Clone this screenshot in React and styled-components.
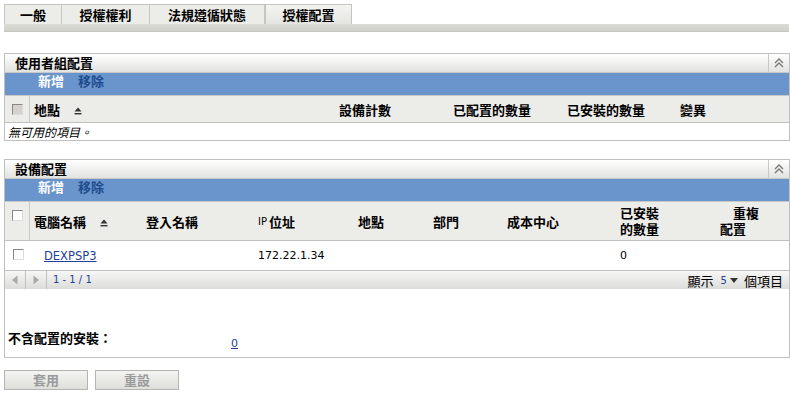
import styled, { createGlobalStyle } from 'styled-components'

const GlobalStyle = createGlobalStyle`
  body {
    margin: 0;
    background: #fff;
    font-family: 'Noto Sans CJK TC', 'DejaVu Sans', sans-serif;
    font-size: 13px;
    color: #000;
  }
`

const tabs = ['一般', '授權權利', '法規遵循狀態', '授權配置']
const tabWidths = [58, 88, 115, 87]

const groupCols = [
  { label: '地點', width: 305, sort: true },
  { label: '設備計數', width: 114 },
  { label: '已配置的數量', width: 114 },
  { label: '已安裝的數量', width: 113 },
  { label: '變異', width: 113 },
]

const deviceCols = [
  { label: '電腦名稱', width: 116, sort: true },
  { label: '登入名稱', width: 112 },
  { label: 'IP 位址', width: 100, ip: true },
  { label: '地點', width: 75 },
  { label: '部門', width: 74 },
  { label: '成本中心', width: 113 },
  { label: ['已安裝', '的數量'], width: 100 },
  { label: ['重複', '配置'], width: 69, shifted: true },
]

const SortIcon = () => (
  <svg width="8" height="8" viewBox="0 0 8 8">
    <path d="M4 0.5 L7.5 4.5 H0.5 Z" fill="#333" />
    <rect x="0.5" y="6" width="7" height="1.4" fill="#333" />
  </svg>
)

const CollapseIcon = () => (
  <svg width="12" height="12" viewBox="0 0 12 12">
    <path d="M2 6 L6 2 L10 6" stroke="#777" strokeWidth="1.4" fill="none" />
    <path d="M2 10 L6 6 L10 10" stroke="#777" strokeWidth="1.4" fill="none" />
  </svg>
)

const Arrow = ({ dir }) => (
  <svg width="8" height="10" viewBox="0 0 8 10">
    {dir === 'left' ? (
      <path d="M6.5 0.5 L1 5 L6.5 9.5 Z" fill="#aaa" />
    ) : (
      <path d="M1.5 0.5 L7 5 L1.5 9.5 Z" fill="#aaa" />
    )}
  </svg>
)

const PanelHeader = ({ title }) => (
  <Head>
    <HeadTitle>{title}</HeadTitle>
    <CollapseBtn>
      <CollapseIcon />
    </CollapseBtn>
  </Head>
)

const Toolbar = () => (
  <Tools>
    <ToolLink active>新增</ToolLink>
    <ToolLink>移除</ToolLink>
  </Tools>
)

export default function App() {
  return (
    <Page>
      <GlobalStyle />
      <TabRow>
        {tabs.map((t, i) => (
          <Tab key={t} width={tabWidths[i]} active={i === 3}>
            {t}
          </Tab>
        ))}
      </TabRow>
      <TabStrip />

      <Panel first>
        <PanelHeader title="使用者組配置" />
        <Toolbar />
        <HeaderRow height={26}>
          <CheckCell>
            <Check disabled />
          </CheckCell>
          {groupCols.map((c) => (
            <HeadCell key={c.label} width={c.width}>
              {c.label}
              {c.sort && (
                <SortWrap>
                  <SortIcon />
                </SortWrap>
              )}
            </HeadCell>
          ))}
        </HeaderRow>
        <EmptyRow>無可用的項目。</EmptyRow>
      </Panel>

      <Panel>
        <PanelHeader title="設備配置" />
        <Toolbar />
        <HeaderRow height={38}>
          <CheckCell>
            <Check />
          </CheckCell>
          {deviceCols.map((c, i) => (
            <HeadCell key={i} width={c.width} pad={i === 0 ? 4 : 0}>
              {Array.isArray(c.label) ? (
                <Stack>
                  <Line shift={c.shifted ? 13 : 0}>{c.label[0]}</Line>
                  <Line>{c.label[1]}</Line>
                </Stack>
              ) : c.ip ? (
                <>
                  <IpTag>IP</IpTag> 位址
                </>
              ) : (
                c.label
              )}
              {c.sort && (
                <SortWrap>
                  <SortIcon />
                </SortWrap>
              )}
            </HeadCell>
          ))}
        </HeaderRow>
        <DataRow>
          <CheckCell plain>
            <Check />
          </CheckCell>
          <DataCell width={116} pad={14}>
            <Link>DEXPSP3</Link>
          </DataCell>
          <DataCell width={112} />
          <DataCell width={100}>172.22.1.34</DataCell>
          <DataCell width={75} />
          <DataCell width={74} />
          <DataCell width={113} />
          <DataCell width={100}>0</DataCell>
        </DataRow>
        <Pager>
          <PagerBtn>
            <Arrow dir="left" />
          </PagerBtn>
          <PagerBtn>
            <Arrow dir="right" />
          </PagerBtn>
          <PagerText>1 - 1 / 1</PagerText>
          <PagerRight>
            顯示 <PageSize>5</PageSize>
            <DropArrow /> 個項目
          </PagerRight>
        </Pager>
        <Summary>
          <SummaryLabel>不含配置的安裝：</SummaryLabel>
          <SummaryLink>0</SummaryLink>
        </Summary>
      </Panel>

      <Buttons>
        <Button>套用</Button>
        <Button>重設</Button>
      </Buttons>
    </Page>
  )
}

const Page = styled.div`
  padding: 4px 1px 0 4px;
  width: 785px;
`

const TabRow = styled.div`
  display: flex;
  height: 20px;
`

const Tab = styled.div`
  width: ${({ width }) => width}px;
  box-sizing: border-box;
  border: 1px solid #c4c4c0;
  border-bottom: none;
  border-left-width: ${({ active }) => (active ? 1 : 0)}px;
  &:first-child {
    border-left-width: 1px;
  }
  background: ${({ active }) =>
    active ? 'linear-gradient(#f4f4f2, #e4e4e0)' : '#ecece9'};
  font-weight: bold;
  font-size: 13px;
  line-height: 19px;
  text-align: center;
`

const TabStrip = styled.div`
  height: 7px;
  background: linear-gradient(#dcdcd7, #d0d0cb);
  border-bottom: 1px solid #c6c6c0;
`

const Panel = styled.div`
  margin-top: ${({ first }) => (first ? 21 : 18)}px;
  border: 1px solid #c0c0c0;
  box-sizing: border-box;
  width: 786px;
`

const Head = styled.div`
  display: flex;
  align-items: stretch;
  height: 18px;
  background: linear-gradient(#ffffff, #e2e2df);
  border-bottom: 1px solid #c8c8c8;
`

const HeadTitle = styled.div`
  flex: 1;
  padding-left: 10px;
  font-weight: bold;
  font-size: 13px;
  line-height: 18px;
`

const CollapseBtn = styled.div`
  width: 20px;
  border-left: 1px solid #c8c8c8;
  display: flex;
  align-items: center;
  justify-content: center;
`

const Tools = styled.div`
  display: flex;
  gap: 14px;
  height: 22px;
  align-items: flex-start;
  padding-left: 33px;
  background: #6a95cc;
  border-bottom: 1px solid #c8c8c8;
`

const ToolLink = styled.span`
  font-weight: bold;
  font-size: 13px;
  line-height: 16px;
  color: ${({ active }) => (active ? '#fff' : '#1f4c8f')};
`

const HeaderRow = styled.div`
  display: flex;
  height: ${({ height }) => height}px;
  background: #ecece9;
  border-bottom: 1px solid #c0c0c0;
`

const CheckCell = styled.div`
  width: 25px;
  box-sizing: border-box;
  border-right: ${({ plain }) => (plain ? 'none' : '1px solid #c8c8c8')};
  display: flex;
  justify-content: center;
  padding-top: 8px;
  padding-left: 1px;
`

const Check = styled.div`
  width: 11px;
  height: 11px;
  box-sizing: border-box;
  border: 1px solid #888;
  border-right-color: #ddd;
  border-bottom-color: #ddd;
  background: ${({ disabled }) => (disabled ? '#d6d3ce' : '#fff')};
`

const HeadCell = styled.div`
  width: ${({ width }) => width}px;
  flex-shrink: 0;
  box-sizing: border-box;
  padding-left: ${({ pad }) => (pad === undefined ? 4 : pad)}px;
  display: flex;
  align-items: center;
  font-weight: bold;
  font-size: 13px;
  &:nth-child(2) {
    padding-left: 4px;
  }
`

const Stack = styled.div`
  display: flex;
  flex-direction: column;
  line-height: 16px;
`

const Line = styled.span`
  display: block;
  height: 16px;
  padding-left: ${({ shift }) => shift || 0}px;
`

const IpTag = styled.span`
  font-family: 'DejaVu Sans', sans-serif;
  font-weight: normal;
  font-size: 10px;
  margin-right: 2px;
`

const SortWrap = styled.span`
  display: inline-flex;
  margin-left: 14px;
  margin-top: 3px;
`

const EmptyRow = styled.div`
  height: 17px;
  line-height: 17px;
  padding-left: 3px;
  font-style: italic;
  font-size: 12px;
`

const DataRow = styled.div`
  display: flex;
  height: 29px;
  border-bottom: 1px solid #c0c0c0;
`

const DataCell = styled.div`
  width: ${({ width }) => width}px;
  flex-shrink: 0;
  box-sizing: border-box;
  padding-left: ${({ pad }) => (pad === undefined ? 0 : pad)}px;
  padding-top: 8px;
  font-family: 'DejaVu Sans', sans-serif;
  font-size: 11px;
  &:nth-child(3) {
    padding-left: 5px;
  }
`

const Link = styled.a`
  color: #1f3f99;
  text-decoration: underline;
  font-family: 'DejaVu Sans', sans-serif;
  font-size: 11.5px;
`

const Pager = styled.div`
  display: flex;
  align-items: stretch;
  height: 18px;
  background: linear-gradient(#f7f7f6, #dcdcd9);
  border-bottom: 1px solid #fff;
`

const PagerBtn = styled.div`
  width: 20px;
  border-right: 1px solid #bfbfbf;
  display: flex;
  align-items: center;
  justify-content: center;
`

const PagerText = styled.div`
  padding-left: 6px;
  font-family: 'DejaVu Sans', sans-serif;
  font-size: 10px;
  line-height: 18px;
  color: #1f3f99;
  flex: 1;
`

const PagerRight = styled.div`
  display: flex;
  align-items: center;
  gap: 3px;
  padding-right: 6px;
  font-size: 13px;
`

const PageSize = styled.span`
  font-family: 'DejaVu Sans', sans-serif;
  font-size: 10px;
  color: #1f3f99;
  margin-left: 4px;
`

const DropArrow = styled.span`
  width: 0;
  height: 0;
  border-left: 4px solid transparent;
  border-right: 4px solid transparent;
  border-top: 5px solid #333;
  margin-right: 3px;
`

const Summary = styled.div`
  display: flex;
  align-items: flex-end;
  height: 67px;
  padding-bottom: 10px;
  box-sizing: border-box;
`

const SummaryLabel = styled.div`
  width: 223px;
  padding-left: 3px;
  font-weight: bold;
  font-size: 13px;
`

const SummaryLink = styled.a`
  color: #1f3f99;
  text-decoration: underline;
  font-family: 'DejaVu Sans', sans-serif;
  font-size: 11px;
  margin-bottom: -3px;
`

const Buttons = styled.div`
  display: flex;
  gap: 7px;
  margin-top: 12px;
`

const Button = styled.div`
  width: 84px;
  height: 20px;
  box-sizing: border-box;
  border: 1px solid #b4b4b0;
  background: linear-gradient(#f4f4f2, #dededa);
  color: #9a9a9a;
  font-weight: bold;
  font-size: 13px;
  line-height: 18px;
  text-align: center;
`
